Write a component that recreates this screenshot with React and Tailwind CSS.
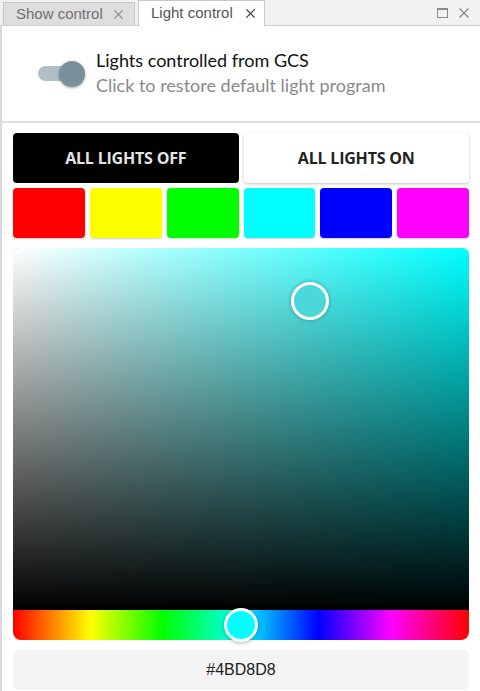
import { useState } from "react";

const swatches = ["#ff0000", "#ffff00", "#00ff00", "#00ffff", "#0000ff", "#ff00ff"];

function CloseIcon({ className }) {
  return (
    <svg viewBox="0 0 12 12" className={className} fill="none" stroke="currentColor" strokeWidth="1.3">
      <path d="M1.5 1.5l9 9M10.5 1.5l-9 9" />
    </svg>
  );
}

export default function App() {
  const [hex] = useState("#4BD8D8");

  return (
    <div className="w-[480px] h-[691px] overflow-hidden bg-white flex flex-col font-['Liberation_Sans',Arial,sans-serif]">
      {/* Tab bar */}
      <div className="h-[26px] flex items-end bg-[#f1f1f1] border-b border-[#cfcfcf] relative">
        <div className="ml-[3px] h-[23px] w-[132px] flex items-center gap-[10px] pl-[12px] bg-[#dedede] border border-b-0 border-[#c8c8c8] text-[15px] text-[#707070]">
          <span>Show control</span>
          <CloseIcon className="w-[11px] h-[11px] text-[#8a8a8a]" />
        </div>
        <div className="ml-[3px] h-[26px] w-[127px] -mb-px flex items-center gap-[12px] pl-[12px] bg-white border border-b-0 border-[#c8c8c8] text-[15px] text-[#555]">
          <span>Light control</span>
          <CloseIcon className="w-[11px] h-[11px] text-[#333]" />
        </div>
        <div className="ml-auto mr-[10px] mb-[6px] flex items-center gap-[10px] text-[#8a8a8a]">
          <div className="w-[11px] h-[10px] border border-[#8a8a8a] border-t-2" />
          <CloseIcon className="w-[12px] h-[12px]" />
        </div>
      </div>

      <div className="flex-1 flex flex-col border-l-2 border-[#d9d9d9]">
        {/* GCS toggle row */}
        <div className="h-[97px] flex items-center border-b-2 border-[#dedede] pl-[36px] font-['Lato','Noto_Sans',sans-serif]">
          <div className="relative w-[47px] h-[26px] flex items-center">
            <div className="w-[42px] h-[15px] rounded-full bg-[#b0bec5]" />
            <div className="absolute right-0 top-0 w-[26px] h-[26px] rounded-full bg-[#78909c] shadow-[0_1px_3px_rgba(0,0,0,0.35)]" />
          </div>
          <div className="ml-[11px] flex flex-col leading-[25px] -mt-[2px]">
            <span className="text-[18px] text-[#111]">Lights controlled from GCS</span>
            <span className="text-[18px] text-[#8a8a8a]">Click to restore default light program</span>
          </div>
        </div>

        <div className="px-[11px] pt-[10px] flex flex-col">
          {/* on/off buttons */}
          <div className="grid grid-cols-2 gap-[5px] h-[50px] font-['Open_Sans',sans-serif]">
            <button className="rounded-[4px] bg-black text-[#e4e4e4] text-[16px] font-bold tracking-[-0.2px]">
              ALL LIGHTS OFF
            </button>
            <button className="rounded-[4px] bg-white text-[#222] text-[16px] font-bold tracking-[-0.2px] shadow-[0_1px_3px_rgba(0,0,0,0.25)]">
              ALL LIGHTS ON
            </button>
          </div>

          {/* swatches */}
          <div className="grid grid-cols-6 gap-[5px] h-[50px] mt-[5px]">
            {swatches.map((c) => (
              <div key={c} className="rounded-[4px] shadow-[0_1px_2px_rgba(0,0,0,0.2)]" style={{ backgroundColor: c }} />
            ))}
          </div>

          {/* saturation area */}
          <div className="mt-[10px] relative h-[362px] rounded-t-[6px] overflow-hidden bg-[#00ffff]">
            <div className="absolute inset-0 bg-gradient-to-r from-white to-transparent" />
            <div className="absolute inset-0 bg-gradient-to-b from-transparent to-black" />
            <div className="absolute left-[278px] top-[34px] w-[38px] h-[38px] rounded-full border-[3px] border-white shadow-[0_0_4px_rgba(0,0,0,0.3)]" style={{ backgroundColor: hex }} />
          </div>

          {/* hue bar */}
          <div className="relative h-[30px] rounded-b-[8px] bg-[linear-gradient(to_right,#ff0000_0%,#ffff00_17%,#00ff00_33%,#00ffff_50%,#0000ff_67%,#ff00ff_83%,#ff0000_100%)]">
            <div className="absolute left-[211px] top-[-2px] w-[34px] h-[34px] rounded-full bg-[#00ffff] border-[3px] border-white shadow-[0_1px_4px_rgba(0,0,0,0.3)]" />
          </div>

          {/* hex */}
          <div className="mt-[10px] h-[40px] rounded-[5px] bg-[#f4f4f4] flex items-center justify-center text-[16px] text-[#222]">
            {hex}
          </div>
        </div>
      </div>
    </div>
  );
}
